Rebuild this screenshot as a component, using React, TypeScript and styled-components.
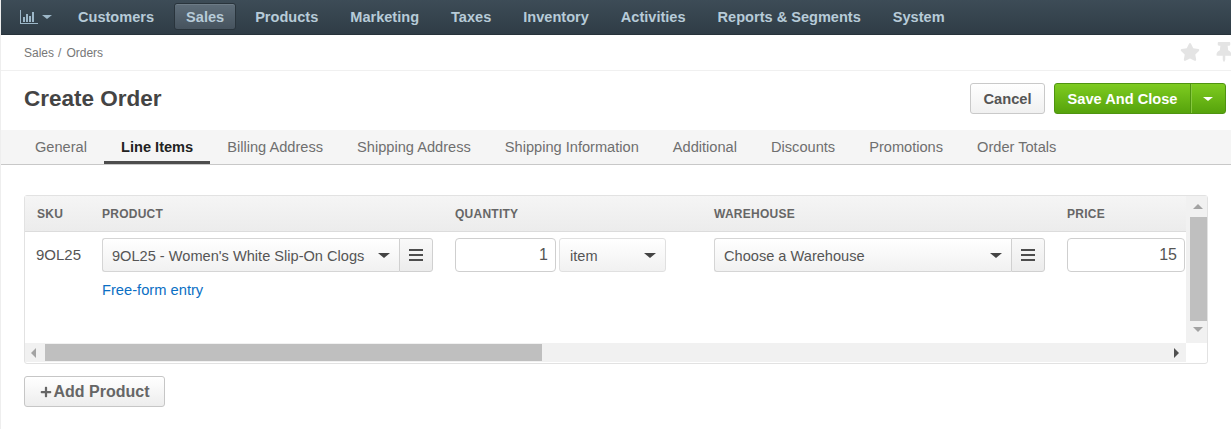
import React, { FC } from 'react';
import styled, { createGlobalStyle } from 'styled-components';
import { FaStar, FaThumbtack, FaPlus } from 'react-icons/fa';

const GlobalStyle = createGlobalStyle`
    html, body {
        margin: 0;
        padding: 0;
        background: #fff;
        overflow: hidden;
    }

    * {
        box-sizing: border-box;
    }
`;

const menuItems = ['Customers', 'Sales', 'Products', 'Marketing', 'Taxes', 'Inventory', 'Activities', 'Reports & Segments', 'System'];
const tabs = ['General', 'Line Items', 'Billing Address', 'Shipping Address', 'Shipping Information', 'Additional', 'Discounts', 'Promotions', 'Order Totals'];

const BarsIcon: FC = () => (
    <svg width="18" height="14" viewBox="0 0 18 14" fill="#9db7c8">
        <rect x="0" y="0" width="1" height="14" />
        <rect x="0" y="13" width="18" height="1" />
        <rect x="3" y="7" width="2" height="5" />
        <rect x="6" y="4" width="2" height="8" />
        <rect x="9" y="6" width="2" height="6" />
        <rect x="12" y="2" width="2" height="10" />
    </svg>
);

const App: FC = () => (
    <Page>
        <GlobalStyle />
        <TopBar>
            <ChartMenu>
                <BarsIcon />
                <Caret $color="#9db7c8" $size={4} />
            </ChartMenu>
            {menuItems.map((item) => (
                <MenuItem key={item} $active={item === 'Sales'}>
                    {item}
                </MenuItem>
            ))}
        </TopBar>
        <BreadcrumbRow>
            <Crumbs>
                Sales<CrumbDivider>/</CrumbDivider>Orders
            </Crumbs>
            <PageIcons>
                <FaStar size={20} />
                <FaThumbtack size={20} />
            </PageIcons>
        </BreadcrumbRow>
        <TitleRow>
            <Title>Create Order</Title>
            <Actions>
                <CancelButton>Cancel</CancelButton>
                <SaveGroup>
                    <SaveButton>Save And Close</SaveButton>
                    <SaveToggle>
                        <Caret $color="#fff" $size={4} />
                    </SaveToggle>
                </SaveGroup>
            </Actions>
        </TitleRow>
        <TabBar>
            {tabs.map((tab) => (
                <Tab key={tab} $active={tab === 'Line Items'}>
                    {tab}
                </Tab>
            ))}
        </TabBar>
        <Content>
            <GridFrame>
                <GridView>
                    <HeaderRow>
                        <SkuCell>SKU</SkuCell>
                        <ProductCell>PRODUCT</ProductCell>
                        <QuantityCell>QUANTITY</QuantityCell>
                        <WarehouseCell>WAREHOUSE</WarehouseCell>
                        <PriceCell>PRICE</PriceCell>
                    </HeaderRow>
                    <BodyRow>
                        <SkuCell>
                            <SkuText>9OL25</SkuText>
                        </SkuCell>
                        <ProductCell>
                            <InputGroup>
                                <Select>
                                    <SelectText>9OL25 - Women&apos;s White Slip-On Clogs</SelectText>
                                    <Caret $color="#444" $size={5} />
                                </Select>
                                <MenuButton>
                                    <Hamburger />
                                </MenuButton>
                            </InputGroup>
                            <FreeForm>Free-form entry</FreeForm>
                        </ProductCell>
                        <QuantityCell>
                            <QuantityGroup>
                                <NumberField $width={101}>1</NumberField>
                                <UnitSelect>
                                    <SelectText>item</SelectText>
                                    <Caret $color="#444" $size={5} />
                                </UnitSelect>
                            </QuantityGroup>
                        </QuantityCell>
                        <WarehouseCell>
                            <InputGroup>
                                <Select>
                                    <SelectText>Choose a Warehouse</SelectText>
                                    <Caret $color="#444" $size={5} />
                                </Select>
                                <MenuButton>
                                    <Hamburger />
                                </MenuButton>
                            </InputGroup>
                        </WarehouseCell>
                        <PriceCell>
                            <NumberField $width={118}>15</NumberField>
                        </PriceCell>
                    </BodyRow>
                </GridView>
                <VerticalBar>
                    <ArrowUp />
                    <VerticalThumb />
                    <ArrowDown />
                </VerticalBar>
                <HorizontalBar>
                    <ArrowLeft />
                    <HorizontalThumb />
                    <ArrowRight />
                </HorizontalBar>
                <Corner />
            </GridFrame>
            <AddButton>
                <FaPlus size={12} />
                Add Product
            </AddButton>
        </Content>
    </Page>
);

const Page = styled.div`
    width: 1231px;
    height: 429px;
    border-left: 1px solid #eeeeee;
    font-family: 'Liberation Sans', Arial, sans-serif;
    color: #444;
    overflow: hidden;
`;

const TopBar = styled.nav`
    height: 35px;
    margin-left: -1px;
    display: flex;
    align-items: flex-start;
    padding: 3px 0 0 20px;
    background: linear-gradient(#3d4c57, #2f3c46);
    border-bottom: 1px solid #27323a;
`;

const ChartMenu = styled.div`
    width: 58px;
    height: 27px;
    display: flex;
    align-items: center;
    gap: 4px;
`;

const Caret = styled.i<{ $color: string; $size: number }>`
    display: block;
    width: 0;
    height: 0;
    border-left: ${({ $size }) => $size + 1}px solid transparent;
    border-right: ${({ $size }) => $size + 1}px solid transparent;
    border-top: ${({ $size }) => $size}px solid ${({ $color }) => $color};
`;

const MenuItem = styled.a<{ $active?: boolean }>`
    height: 27px;
    display: flex;
    align-items: center;
    padding: 0 ${({ $active }) => ($active ? '11px' : '0')};
    margin-right: ${({ $active }) => ($active ? '19px' : '32px')};
    margin-left: ${({ $active }) => ($active ? '-12px' : '0')};
    border-radius: 3px;
    font-size: 14.57px;
    font-weight: 700;
    color: #b7cbd8;
    ${({ $active }) =>
        $active &&
        `
        background: linear-gradient(#5e6d79, #46535e);
        border: 1px solid #29343c;
        box-shadow: inset 0 1px 0 #6d7b86;
    `}
`;

const BreadcrumbRow = styled.div`
    height: 36px;
    position: relative;
    display: flex;
    align-items: center;
    justify-content: space-between;
    padding-left: 23px;
    border-bottom: 1px solid #f0f0f0;
`;

const Crumbs = styled.div`
    font-size: 12px;
    color: #777;
`;

const CrumbDivider = styled.span`
    margin: 0 5px 0 4px;
`;

const PageIcons = styled.div`
    position: absolute;
    top: 7px;
    left: 1179px;
    display: flex;
    gap: 14px;
    color: #e4e4e4;
`;

const TitleRow = styled.div`
    height: 59px;
    display: flex;
    align-items: flex-start;
    justify-content: space-between;
    padding: 12px 5px 0 23px;
`;

const Title = styled.h1`
    margin: 0;
    font-size: 22.5px;
    line-height: 32px;
    font-weight: 700;
    color: #444;
`;

const Actions = styled.div`
    display: flex;
    gap: 9px;
`;

const CancelButton = styled.button`
    width: 75px;
    height: 31px;
    padding: 0;
    font-family: inherit;
    font-size: 14.7px;
    font-weight: 700;
    color: #555;
    background: linear-gradient(#ffffff, #f0f0f0);
    border: 1px solid #c9c9c9;
    border-radius: 3px;
`;

const SaveGroup = styled.div`
    display: flex;
    width: 172px;
    height: 31px;
    border: 1px solid #4f9410;
    border-radius: 3px;
    background: linear-gradient(#7ecb20, #56a30c);
`;

const SaveButton = styled.div`
    width: 136px;
    display: flex;
    align-items: center;
    justify-content: center;
    font-size: 14.6px;
    font-weight: 700;
    color: #fff;
    border-right: 1px solid #4f9410;
`;

const SaveToggle = styled.div`
    flex: 1;
    display: flex;
    align-items: center;
    justify-content: center;
    box-shadow: inset 1px 0 0 #86c83f;
`;

const TabBar = styled.div`
    height: 35px;
    display: flex;
    padding-left: 17px;
    background: #f5f5f5;
    border-bottom: 1px solid #c8c8c8;
`;

const Tab = styled.div<{ $active?: boolean }>`
    height: 34px;
    padding: 2px 17px 0;
    display: flex;
    align-items: center;
    font-size: 14.62px;
    font-weight: ${({ $active }) => ($active ? 700 : 400)};
    color: ${({ $active }) => ($active ? '#222' : '#6f6f6f')};
    border-bottom: 3px solid ${({ $active }) => ($active ? '#4d4d4d' : 'transparent')};
    margin-bottom: -1px;
`;

const Content = styled.div`
    padding: 30px 0 0 23px;
`;

const GridFrame = styled.div`
    width: 1184px;
    height: 169px;
    display: grid;
    grid-template-columns: 1161px 21px;
    grid-template-rows: 147px 19px;
    border: 1px solid #e2e2e2;
    border-radius: 3px;
`;

const GridView = styled.div`
    overflow: hidden;
`;

const tableColumns = `
    display: grid;
    grid-template-columns: 77px 353px 259px 353px 130px;
`;

const HeaderRow = styled.div`
    ${tableColumns};
    height: 36px;
    align-items: center;
    background: linear-gradient(#f5f5f5, #ececec);
    border-bottom: 1px solid #dcdcdc;
    font-size: 12px;
    font-weight: 700;
    letter-spacing: 0.25px;
    color: #666;
`;

const BodyRow = styled.div`
    ${tableColumns};
    padding-top: 6px;
    align-items: start;
    background: #fff;
`;

const SkuCell = styled.div`
    padding-left: 12px;
`;

const SkuText = styled.div`
    font-size: 15px;
    line-height: 34px;
    margin-left: -1px;
    color: #555;
`;

const ProductCell = styled.div`
    padding-right: 22px;
`;

const QuantityCell = styled.div``;

const WarehouseCell = styled.div`
    padding-right: 22px;
`;

const PriceCell = styled.div``;

const InputGroup = styled.div`
    display: flex;
    height: 34px;
`;

const Select = styled.div`
    flex: 1;
    display: flex;
    align-items: center;
    justify-content: space-between;
    padding: 0 9px;
    font-size: 14.6px;
    color: #555;
    background: linear-gradient(#ffffff, #f1f1f1);
    border: 1px solid #d5d5d5;
    border-right: 0;
    border-radius: 3px 0 0 3px;
`;

const SelectText = styled.span`
    padding-top: 2px;
`;

const MenuButton = styled.div`
    width: 34px;
    display: flex;
    align-items: center;
    justify-content: center;
    background: linear-gradient(#f9f9f9, #ececec);
    border: 1px solid #d0d0d0;
    border-radius: 0 3px 3px 0;
`;

const Hamburger = styled.i`
    display: block;
    width: 14px;
    height: 12px;
    border-top: 2px solid #4d4d4d;
    border-bottom: 2px solid #4d4d4d;
    position: relative;

    &::before {
        content: '';
        position: absolute;
        left: 0;
        right: 0;
        top: 3px;
        height: 2px;
        background: #4d4d4d;
    }
`;

const FreeForm = styled.a`
    display: block;
    margin-top: 10px;
    font-size: 14.7px;
    line-height: 16px;
    color: #0b6fc4;
`;

const QuantityGroup = styled.div`
    display: flex;
    gap: 3px;
`;

const NumberField = styled.div<{ $width: number }>`
    width: ${({ $width }) => $width}px;
    height: 34px;
    display: flex;
    align-items: center;
    justify-content: flex-end;
    padding-right: 7px;
    font-size: 16px;
    color: #555;
    background: #fff;
    border: 1px solid #cfcfcf;
    border-radius: 4px;
`;

const UnitSelect = styled.div`
    width: 107px;
    height: 34px;
    display: flex;
    align-items: center;
    justify-content: space-between;
    padding: 0 9px 0 10px;
    font-size: 14.6px;
    color: #555;
    background: linear-gradient(#ffffff, #f1f1f1);
    border: 1px solid #e0e0e0;
    border-radius: 3px;
`;

const VerticalBar = styled.div`
    display: flex;
    flex-direction: column;
    align-items: center;
    padding: 8px 0 0 3px;
    background: #f1f1f1;
`;

const VerticalThumb = styled.div`
    width: 17px;
    height: 104px;
    margin-top: 8px;
    margin-bottom: 6px;
    background: #bfbfbf;
`;

const HorizontalBar = styled.div`
    display: flex;
    align-items: center;
    padding: 0 0 0 6px;
    background: #f1f1f1;
`;

const HorizontalThumb = styled.div`
    width: 497px;
    height: 17px;
    margin-left: 9px;
    background: #bfbfbf;
`;

const Corner = styled.div`
    background: #fff;
`;

const ArrowUp = styled.i`
    border-left: 5px solid transparent;
    border-right: 5px solid transparent;
    border-bottom: 5px solid #a3a3a3;
`;

const ArrowDown = styled.i`
    border-left: 5px solid transparent;
    border-right: 5px solid transparent;
    border-top: 5px solid #a3a3a3;
`;

const ArrowLeft = styled.i`
    border-top: 5px solid transparent;
    border-bottom: 5px solid transparent;
    border-right: 5px solid #a3a3a3;
`;

const ArrowRight = styled.i`
    border-top: 5px solid transparent;
    border-bottom: 5px solid transparent;
    border-left: 5px solid #505050;
    margin-left: auto;
    margin-right: 7px;
`;

const AddButton = styled.button`
    width: 141px;
    height: 31px;
    margin-top: 12px;
    padding: 0;
    display: flex;
    align-items: center;
    justify-content: center;
    gap: 2px;
    font-family: inherit;
    font-size: 16px;
    font-weight: 700;
    color: #666;
    background: linear-gradient(#ffffff, #ededed);
    border: 1px solid #c6c6c6;
    border-radius: 3px;
`;

export default App;
